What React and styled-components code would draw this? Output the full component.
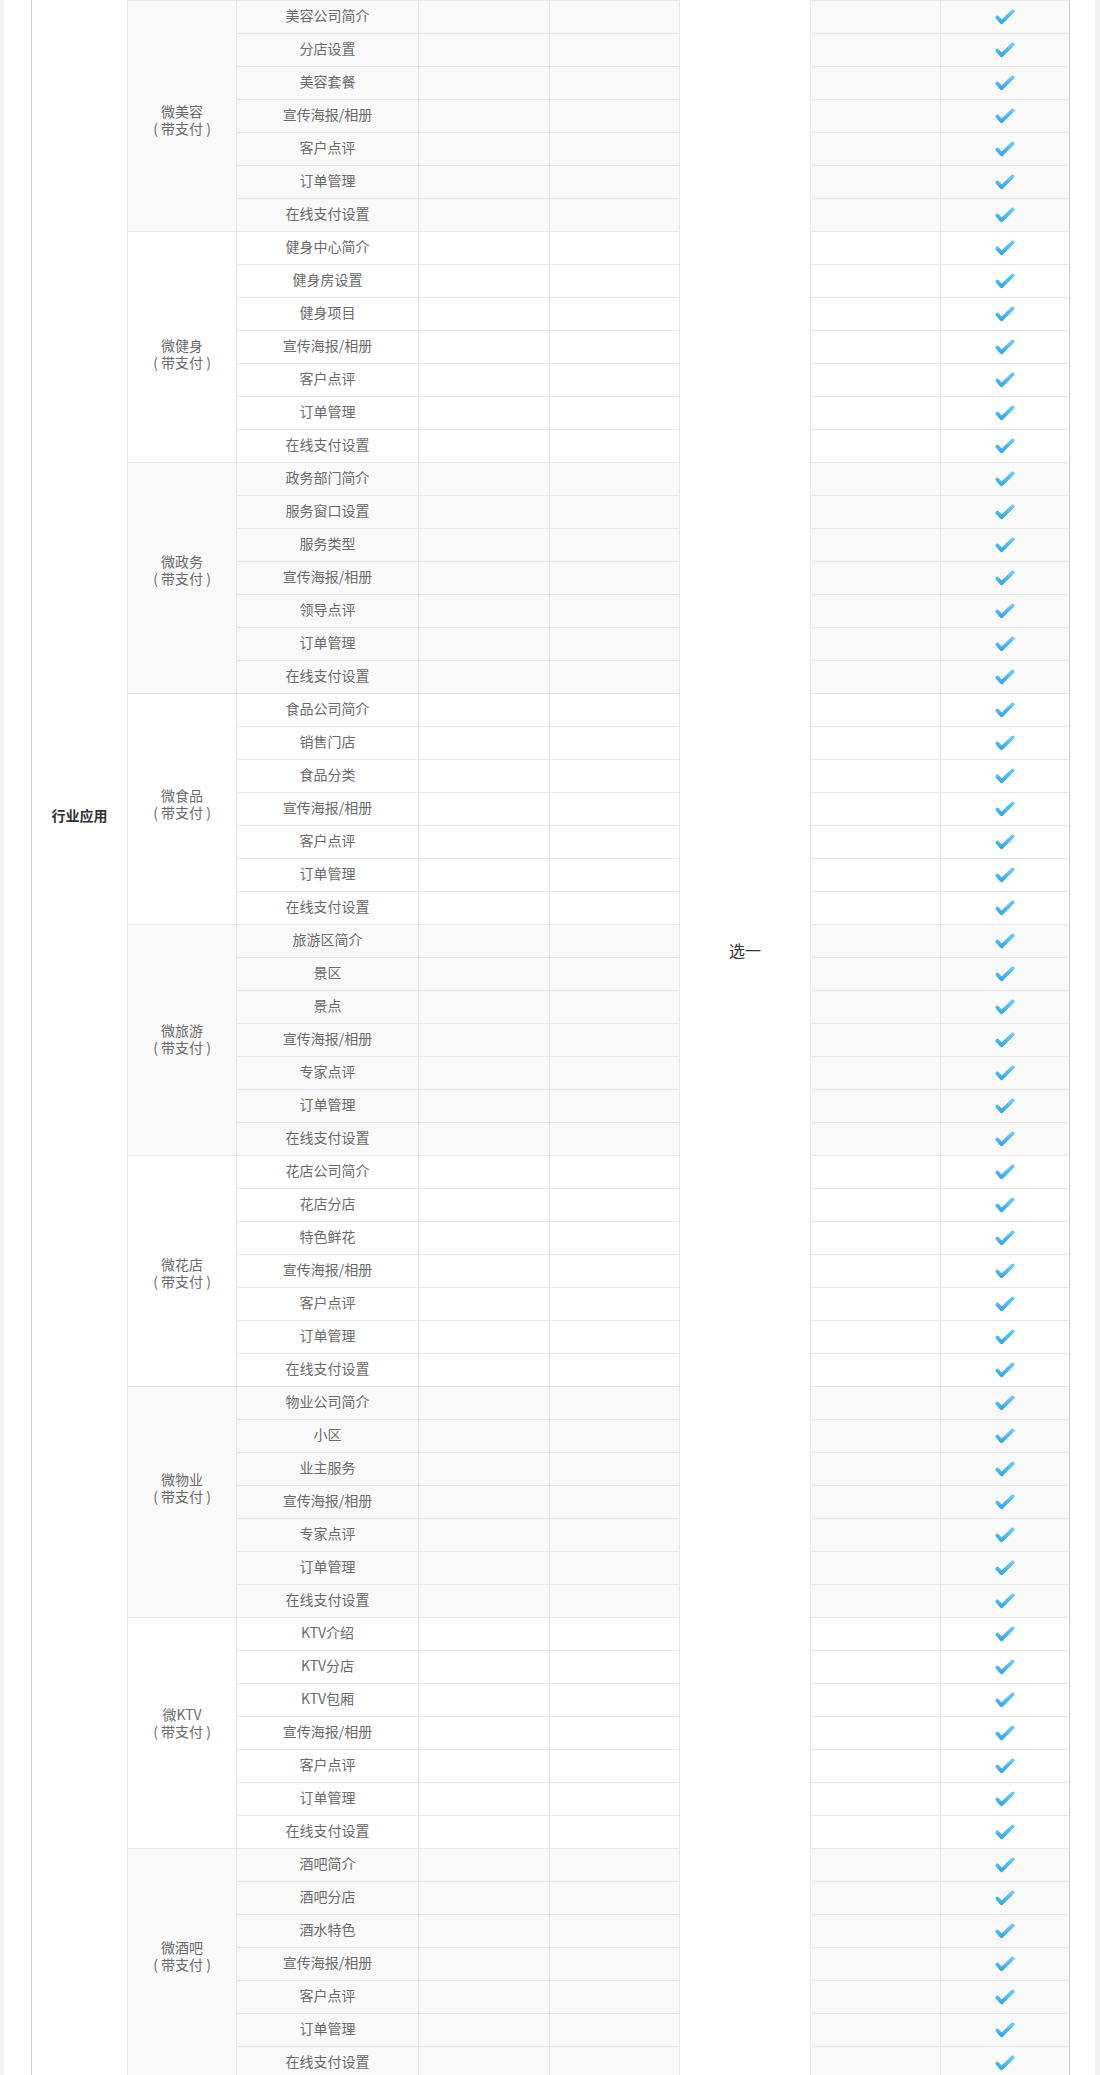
import React from 'react';
import styled, { createGlobalStyle } from 'styled-components';

const GlobalStyle = createGlobalStyle`
  body {
    margin: 0;
    background: #f1f1f1;
    font-family: "Noto Sans CJK SC", "Noto Sans", sans-serif;
  }
  * {
    box-sizing: border-box;
  }
`;

const Page = styled.div`
  margin: 0 5px 0 4px;
  padding: 0 25px 0 27px;
  background: #fff;
`;

const Table = styled.div`
  display: grid;
  grid-template-columns: 97px 109px 182px 131px 130px 131px 130px 129px;
  grid-auto-rows: 33px;
  width: 1039px;
`;

const SpanCell = styled.div`
  grid-column: ${(p) => p.$col};
  grid-row: 1 / span 63;
  display: flex;
  justify-content: center;
  align-items: flex-start;
  padding-top: ${(p) => p.$top}px;
  background: #fff;
  color: #333;
  font-size: ${(p) => p.$size}px;
  font-weight: ${(p) => (p.$bold ? 700 : 400)};
  line-height: 20px;
  border-right: 1px solid #e6e6e6;
  border-left: ${(p) => (p.$outer ? '1px solid #cbcbcb' : '0')};
`;

// shift moves the label off the middle of its 7 rows, as in the original
const GroupCell = styled.div`
  grid-column: 2;
  grid-row: ${(p) => p.$row} / span 7;
  display: flex;
  flex-direction: column;
  justify-content: center;
  align-items: center;
  padding-top: ${(p) => Math.max(0, p.$shift * 2)}px;
  padding-bottom: ${(p) => Math.max(0, -p.$shift * 2)}px;
  background: ${(p) => (p.$alt ? '#f9f9f9' : '#fff')};
  border-top: 1px solid #e6e6e6;
  border-right: 1px solid #e6e6e6;
  color: #6a6a6a;
  font-size: 14px;
  line-height: 17px;
`;

const Cell = styled.div`
  display: flex;
  justify-content: center;
  align-items: center;
  padding-bottom: ${(p) => (p.$text ? 4 : 0)}px;
  background: ${(p) => (p.$alt ? '#f9f9f9' : '#fff')};
  border-top: 1px solid #e6e6e6;
  border-right: 1px solid ${(p) => (p.$last ? '#cbcbcb' : '#e6e6e6')};
  color: #6a6a6a;
  font-size: 14px;
`;

const Check = () => (
  <svg width="20" height="16" viewBox="0 0 20 16">
    <defs>
      <linearGradient id="chk" x1="0" y1="0" x2="0" y2="1">
        <stop offset="0" stopColor="#6ccaf6" />
        <stop offset="1" stopColor="#3aa7e6" />
      </linearGradient>
    </defs>
    <path
      d="M2.4 8.4 L6.6 13.2 L17.6 2.4"
      fill="none"
      stroke="url(#chk)"
      strokeWidth="3.8"
      strokeLinecap="round"
      strokeLinejoin="round"
    />
  </svg>
);

const tail = ['宣传海报/相册', '客户点评', '订单管理', '在线支付设置'];

const groups = [
  { name: '微美容', shift: 4, items: ['美容公司简介', '分店设置', '美容套餐', ...tail] },
  { name: '微健身', shift: 7, items: ['健身中心简介', '健身房设置', '健身项目', ...tail] },
  { name: '微政务', shift: -8, items: ['政务部门简介', '服务窗口设置', '服务类型', '宣传海报/相册', '领导点评', '订单管理', '在线支付设置'] },
  { name: '微食品', shift: -5, items: ['食品公司简介', '销售门店', '食品分类', ...tail] },
  { name: '微旅游', shift: -1, items: ['旅游区简介', '景区', '景点', '宣传海报/相册', '专家点评', '订单管理', '在线支付设置'] },
  { name: '微花店', shift: 2, items: ['花店公司简介', '花店分店', '特色鲜花', ...tail] },
  { name: '微物业', shift: -14, items: ['物业公司简介', '小区', '业主服务', '宣传海报/相册', '专家点评', '订单管理', '在线支付设置'] },
  { name: '微KTV', shift: -10, items: ['KTV介绍', 'KTV分店', 'KTV包厢', ...tail] },
  { name: '微酒吧', shift: -8, items: ['酒吧简介', '酒吧分店', '酒水特色', ...tail] },
];

const App = () => {
  return (
    <>
      <GlobalStyle />
      <Page>
        <Table>
          <SpanCell $col={1} $top={805} $size={14} $bold $outer>
            行业应用
          </SpanCell>
          <SpanCell $col={6} $top={940} $size={16}>
            选一
          </SpanCell>
          {groups.map((g, gi) => {
            const alt = gi % 2 === 0;
            return (
              <React.Fragment key={g.name}>
                <GroupCell $row={gi * 7 + 1} $alt={alt} $shift={g.shift}>
                  <span>{g.name}</span>
                  <span>( 带支付 )</span>
                </GroupCell>
                {g.items.map((item, i) => (
                  <React.Fragment key={i}>
                    <Cell $alt={alt} $text>{item}</Cell>
                    <Cell $alt={alt} />
                    <Cell $alt={alt} />
                    <Cell $alt={alt} />
                    <Cell $alt={alt} $last>
                      <Check />
                    </Cell>
                  </React.Fragment>
                ))}
              </React.Fragment>
            );
          })}
        </Table>
      </Page>
    </>
  );
};

export default App;
